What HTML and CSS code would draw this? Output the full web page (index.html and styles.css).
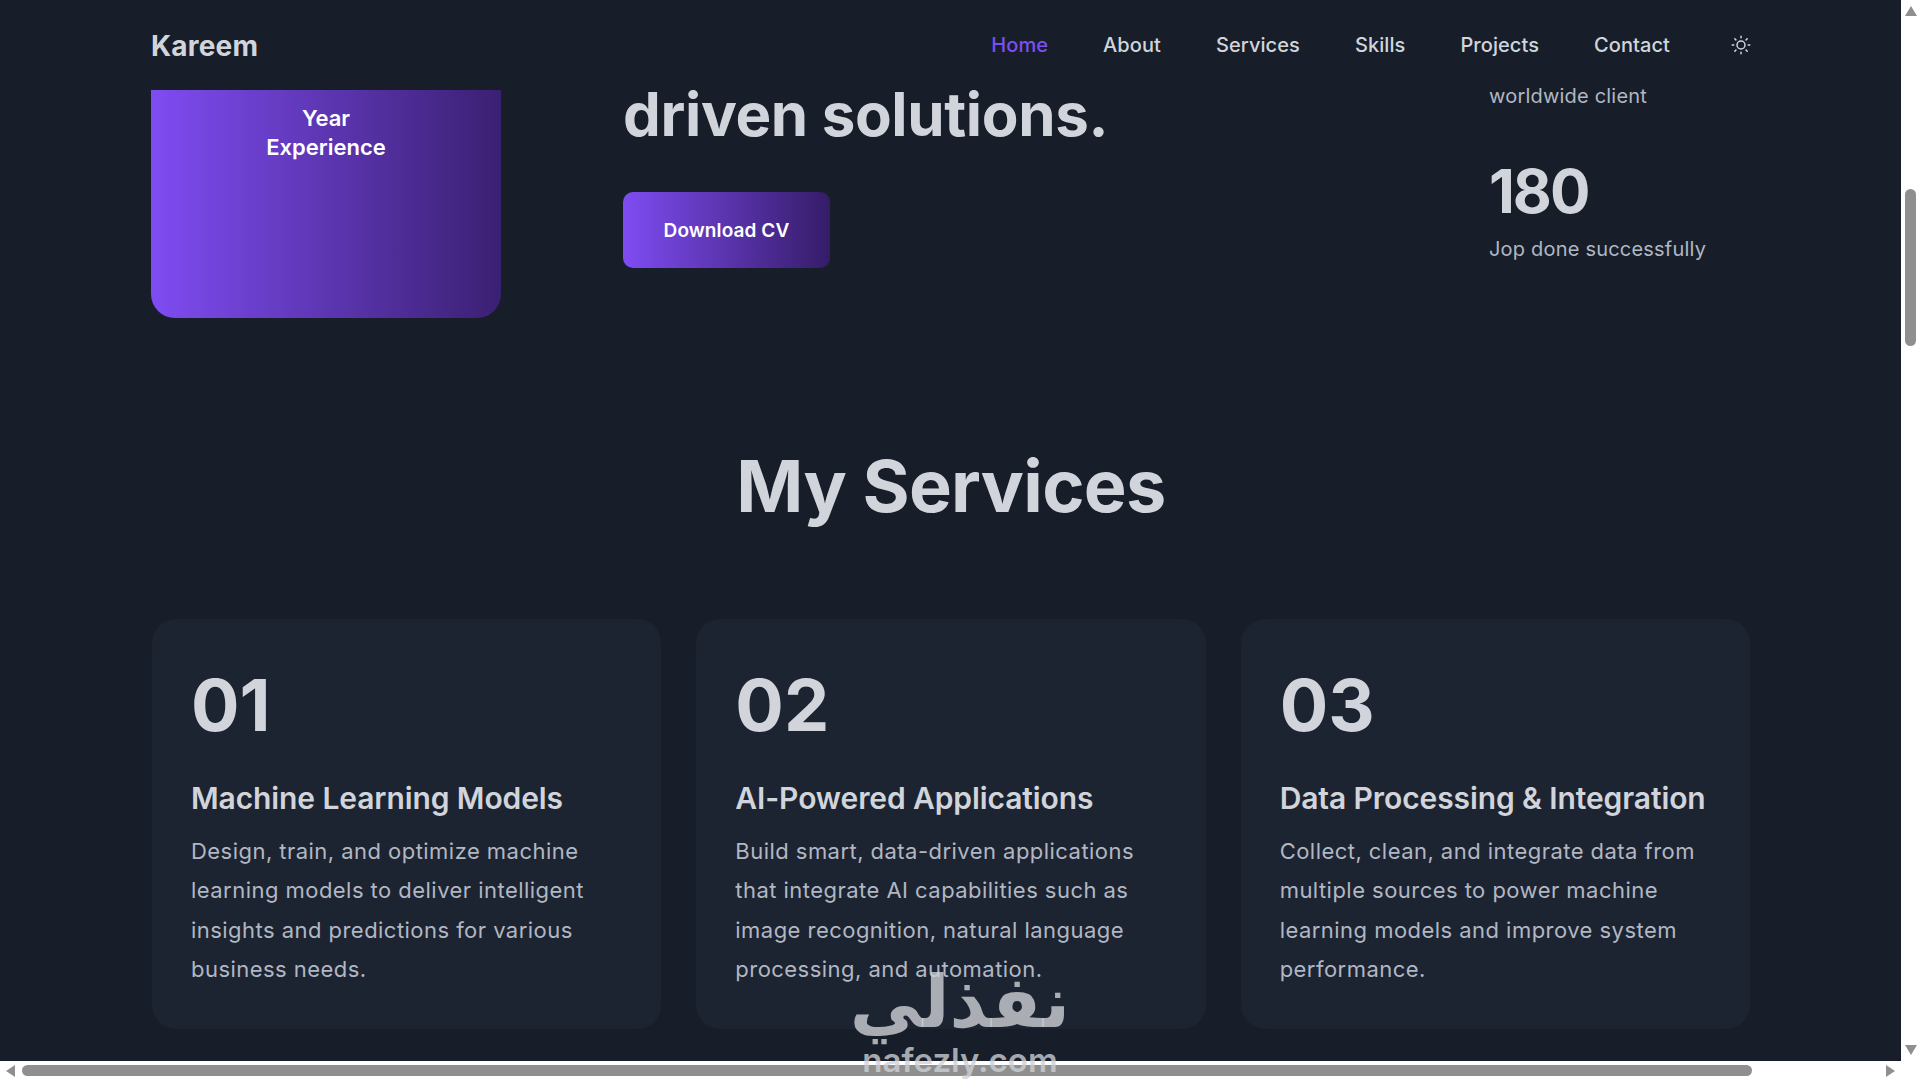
FILE: index.html
```html
<!DOCTYPE html>
<html lang="en">
<head>
<meta charset="utf-8">
<title>Kareem</title>
<link rel="stylesheet" href="styles.css">
</head>
<body>
<div class="window">
  <div class="viewport">
    <header class="nav">
      <div class="logo">Kareem</div>
      <nav class="links">
        <a class="link active">Home</a>
        <a class="link">About</a>
        <a class="link">Services</a>
        <a class="link">Skills</a>
        <a class="link">Projects</a>
        <a class="link">Contact</a>
        <svg class="sun" viewBox="0 0 20 20" fill="none" stroke="currentColor" stroke-width="1.5" stroke-linecap="round">
          <circle cx="10" cy="10" r="4"/>
          <path d="M10 1.2v1.6M10 17.2v1.6M1.2 10h1.6M17.2 10h1.6M3.8 3.8l1.1 1.1M15.1 15.1l1.1 1.1M3.8 16.2l1.1-1.1M15.1 4.9l1.1-1.1"/>
        </svg>
      </nav>
    </header>
    <section class="hero">
      <div class="exp-card">
        <div class="exp-text">Year<br>Experience</div>
      </div>
      <div class="intro">
        <h1 class="headline">driven solutions.</h1>
        <a class="cv">Download CV</a>
      </div>
      <div class="stats">
        <p class="stat-label first">worldwide client</p>
        <div class="stat-num">180</div>
        <p class="stat-label">Jop done successfully</p>
      </div>
    </section>
    <section class="services">
      <h2 class="services-title">My Services</h2>
      <div class="grid">
        <article class="card">
          <div class="num">01</div>
          <h3 class="card-title">Machine Learning Models</h3>
          <p class="card-text">Design, train, and optimize machine<br>learning models to deliver intelligent<br>insights and predictions for various<br>business needs.</p>
        </article>
        <article class="card">
          <div class="num">02</div>
          <h3 class="card-title">AI-Powered Applications</h3>
          <p class="card-text">Build smart, data-driven applications<br>that integrate AI capabilities such as<br>image recognition, natural language<br>processing, and automation.</p>
        </article>
        <article class="card">
          <div class="num">03</div>
          <h3 class="card-title">Data Processing &amp; Integration</h3>
          <p class="card-text">Collect, clean, and integrate data from<br>multiple sources to power machine<br>learning models and improve system<br>performance.</p>
        </article>
      </div>
    </section>
  </div>
  <div class="vbar">
    <span class="tri tri-up"></span>
    <span class="vthumb"></span>
    <span class="tri tri-down"></span>
  </div>
  <div class="hbar">
    <span class="tri tri-left"></span>
    <span class="hthumb"></span>
    <span class="tri tri-right"></span>
  </div>
  <div class="corner"></div>
  <div class="watermark">
    <div class="wm-ar" dir="rtl" lang="ar">نفذلي</div>
    <div class="wm-en">nafezly.com</div>
  </div>
</div>
</body>
</html>
```
FILE: styles.css
```css
* { box-sizing: border-box; }
html, body { margin: 0; height: 100%; overflow: hidden; }
body { font-family: Inter, "Liberation Sans", sans-serif; background: #fff; }

.window {
  position: relative;
  display: grid;
  grid-template-columns: 1901px 19px;
  grid-template-rows: 1061px 19px;
  width: 1920px;
  height: 1080px;
}
.viewport { background: #171e2a; overflow: hidden; color: #d1d5db; }

.nav {
  display: flex;
  align-items: center;
  justify-content: space-between;
  height: 90px;
  padding: 1px 150px 0 151px;
}
.logo { font-size: 28px; font-weight: 700; letter-spacing: 0.2px; }
.links { display: flex; align-items: center; gap: 55px; margin-top: -1px; }
.link { font-size: 20px; font-weight: 500; letter-spacing: 0.08px; color: #d1d5db; }
.link.active { color: #7c4ff0; }
.sun { width: 20px; height: 20px; margin-left: 6px; color: #d1d5db; }

.hero {
  display: grid;
  grid-template-columns: 350px 1fr 262px;
  column-gap: 122px;
  height: 228px;
  padding: 0 150px 0 151px;
}
.exp-card {
  background: linear-gradient(90deg, #7f4cf2, #3a2072);
  border-radius: 0 0 24px 24px;
  color: #fff;
  font-size: 22px;
  font-weight: 600;
  line-height: 29px;
  text-align: center;
  padding-top: 14px;
}
.intro { display: flex; flex-direction: column; align-items: flex-start; }
.headline {
  margin: -6px 0 0;
  font-size: 60px;
  font-weight: 700;
  line-height: 60px;
  color: #d1d5db;
  letter-spacing: -0.36px;
}
.cv {
  margin-top: 48px;
  width: 207px;
  height: 76px;
  display: flex;
  align-items: center;
  justify-content: center;
  border-radius: 10px;
  background: linear-gradient(90deg, #7f4cf2, #351c68);
  color: #fff;
  font-size: 19px;
  font-weight: 600;
  letter-spacing: 0.1px;
}
.stat-label { margin: 0; font-size: 20px; line-height: 30px; letter-spacing: 0.2px; color: #b1b7c3; }
.stat-label.first { margin-top: -9px; }
.stat-num { margin-top: 45px; font-size: 60px; font-weight: 700; line-height: 70px; letter-spacing: -2px; color: #d1d5db; }
.stat-label:last-child { margin-top: 8px; }

.services { padding: 0 150px 0 151px; }
.services-title {
  margin: 123px 0 0;
  font-size: 72px;
  font-weight: 700;
  line-height: 90px;
  letter-spacing: -0.7px;
  text-align: center;
  color: #d1d5db;
}
.grid {
  display: grid;
  grid-template-columns: repeat(3, 1fr);
  gap: 35px;
  margin-top: 88px;
  padding: 0 1px;
}
.card {
  height: 410px;
  padding: 41px 39px 0;
  border-radius: 24px;
  background: #1d2431;
}
.num { font-size: 72px; font-weight: 700; line-height: 90px; color: #d1d5db; }
.card-title { margin: 28px 0 0; font-size: 30px; font-weight: 600; line-height: 40px; letter-spacing: -0.1px; color: #d1d5db; }
.card-text { margin: 14px 0 0; font-size: 22px; line-height: 39.4px; letter-spacing: 0.46px; color: #b1b7c3; }

.vbar {
  display: flex;
  flex-direction: column;
  align-items: center;
  padding: 6px 0;
  background: #fff;
}
.vthumb {
  width: 11px;
  height: 157px;
  margin-top: 173px;
  border-radius: 6px;
  background: #8f8f8f;
}
.hbar {
  display: flex;
  align-items: center;
  padding: 0 6px;
  background: #fff;
}
.hthumb {
  width: 1730px;
  height: 11px;
  margin-left: 7px;
  border-radius: 6px;
  background: #8f8f8f;
}
.corner { background: #fff; }
.tri { display: block; width: 0; height: 0; }
.tri-up { border: 6.5px solid transparent; border-top: 0; border-bottom: 10px solid #8f8f8f; }
.tri-down { margin-top: auto; margin-bottom: 0; border: 6.5px solid transparent; border-bottom: 0; border-top: 10px solid #8f8f8f; }
.tri-left { border: 6px solid transparent; border-left: 0; border-right: 9px solid #8f8f8f; }
.tri-right { margin-left: auto; border: 6px solid transparent; border-right: 0; border-left: 9px solid #8f8f8f; }

.watermark {
  position: absolute;
  left: 858px;
  top: 960px;
  width: 212px;
  text-align: center;
  color: rgba(206, 208, 212, 0.8);
  pointer-events: none;
}
.wm-ar { font-family: "DejaVu Sans", sans-serif; font-size: 72px; font-weight: 700; line-height: 84px; }
.wm-en { font-family: Inter, sans-serif; font-size: 33px; font-weight: 600; line-height: 32px; margin-left: -8px; }
```
